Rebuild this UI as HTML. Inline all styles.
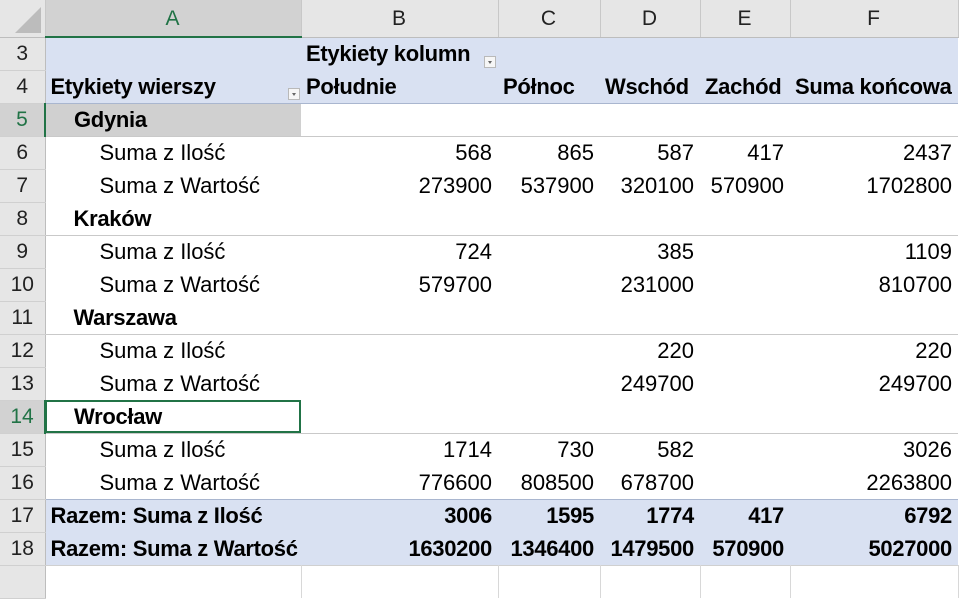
<!DOCTYPE html>
<html><head><meta charset="utf-8"><style>
*{margin:0;padding:0;box-sizing:border-box}
body{width:960px;height:572px;overflow:hidden;background:#fff;font-family:"Liberation Sans",Arial,sans-serif;font-size:22px;color:#000}
table{border-collapse:collapse;table-layout:fixed;position:absolute;left:0;top:0;width:958px}
td{height:33px;padding:1px 6px 0 5px;white-space:nowrap;overflow:visible;vertical-align:middle}
tr.hdr td{height:37px;background:#e6e6e6;text-align:center;color:#222;border-right:1px solid #c8c8c8;border-bottom:1px solid #bdbdbd;font-size:21px}
td.rn{background:#e6e6e6;text-align:center;padding:0;color:#222;border-bottom:1px solid #d0d0d0;border-right:1px solid #bdbdbd;font-size:21px}
.blue td:not(.rn){background:#d9e1f2}
.b{font-weight:bold;letter-spacing:-0.3px}
.r{text-align:right}
.i1{padding-left:28px}
.i2{padding-left:54px}
.sep td:not(.rn){border-top:1px solid #c9c9c9}
.sepb td:not(.rn){border-top:1px solid #a9b6cf}
.dd{display:inline-block;width:12px;height:12px;border:1px solid #b9b9b9;background:#f6f6f6;vertical-align:middle;position:relative}
.dd:after{content:"";position:absolute;left:3px;top:4px;border-left:2.5px solid transparent;border-right:2.5px solid transparent;border-top:3px solid #666}
</style></head><body>
<table>
<colgroup><col style="width:45px"><col style="width:256px"><col style="width:197px"><col style="width:102px"><col style="width:100px"><col style="width:90px"><col style="width:168px"></colgroup>
<tr class="hdr"><td style="background:#e6e6e6;position:relative"><div style="position:absolute;right:4px;bottom:4px;width:0;height:0;border-left:26px solid transparent;border-bottom:26px solid #bcbcbc"></div></td><td style="background:#d2d2d2;color:#217346;border-bottom:2px solid #217346">A</td><td>B</td><td>C</td><td>D</td><td>E</td><td>F</td></tr>
<tr class="blue"><td class="rn">3</td><td></td><td class="b" colspan="2" style="position:relative">Etykiety kolumn <span class="dd" style="position:absolute;left:183px;top:18px"></span></td><td></td><td></td><td></td></tr>
<tr class="blue"><td class="rn">4</td><td class="b" style="position:relative">Etykiety wierszy<span class="dd" style="position:absolute;right:1px;top:18px"></span></td><td class="b">Południe</td><td class="b">Północ</td><td class="b">Wschód</td><td class="b">Zachód</td><td class="b">Suma końcowa</td></tr>
<tr class="sepb"><td class="rn" style="background:#d2d2d2;color:#217346;border-right:2px solid #217346">5</td><td class="b i1" style="background:#d0d0d0">Gdynia</td><td></td><td></td><td></td><td></td><td></td></tr>
<tr class="sep"><td class="rn">6</td><td class="i2">Suma z Ilość</td><td class="r">568</td><td class="r">865</td><td class="r">587</td><td class="r">417</td><td class="r">2437</td></tr>
<tr><td class="rn">7</td><td class="i2">Suma z Wartość</td><td class="r">273900</td><td class="r">537900</td><td class="r">320100</td><td class="r">570900</td><td class="r">1702800</td></tr>
<tr><td class="rn">8</td><td class="b i1">Kraków</td><td></td><td></td><td></td><td></td><td></td></tr>
<tr class="sep"><td class="rn">9</td><td class="i2">Suma z Ilość</td><td class="r">724</td><td></td><td class="r">385</td><td></td><td class="r">1109</td></tr>
<tr><td class="rn">10</td><td class="i2">Suma z Wartość</td><td class="r">579700</td><td></td><td class="r">231000</td><td></td><td class="r">810700</td></tr>
<tr><td class="rn">11</td><td class="b i1">Warszawa</td><td></td><td></td><td></td><td></td><td></td></tr>
<tr class="sep"><td class="rn">12</td><td class="i2">Suma z Ilość</td><td></td><td></td><td class="r">220</td><td></td><td class="r">220</td></tr>
<tr><td class="rn">13</td><td class="i2">Suma z Wartość</td><td></td><td></td><td class="r">249700</td><td></td><td class="r">249700</td></tr>
<tr><td class="rn" style="background:#d2d2d2;color:#217346;border-right:2px solid #217346">14</td><td class="b i1" style="outline:2px solid #217346;outline-offset:-2px">Wrocław</td><td></td><td></td><td></td><td></td><td></td></tr>
<tr class="sep"><td class="rn">15</td><td class="i2">Suma z Ilość</td><td class="r">1714</td><td class="r">730</td><td class="r">582</td><td></td><td class="r">3026</td></tr>
<tr><td class="rn">16</td><td class="i2">Suma z Wartość</td><td class="r">776600</td><td class="r">808500</td><td class="r">678700</td><td></td><td class="r">2263800</td></tr>
<tr class="blue sepb"><td class="rn">17</td><td class="b">Razem: Suma z Ilość</td><td class="b r">3006</td><td class="b r">1595</td><td class="b r">1774</td><td class="b r">417</td><td class="b r">6792</td></tr>
<tr class="blue"><td class="rn">18</td><td class="b">Razem: Suma z Wartość</td><td class="b r">1630200</td><td class="b r">1346400</td><td class="b r">1479500</td><td class="b r">570900</td><td class="b r">5027000</td></tr>
<tr><td class="rn" style="height:10px"></td><td style="height:10px;border-top:1px solid #d0d0d0;border-right:1px solid #d8d8d8"></td><td style="border-top:1px solid #d0d0d0;border-right:1px solid #d8d8d8"></td><td style="border-top:1px solid #d0d0d0;border-right:1px solid #d8d8d8"></td><td style="border-top:1px solid #d0d0d0;border-right:1px solid #d8d8d8"></td><td style="border-top:1px solid #d0d0d0;border-right:1px solid #d8d8d8"></td><td style="border-top:1px solid #d0d0d0;border-right:1px solid #d8d8d8"></td></tr>
</table>
</body></html>
